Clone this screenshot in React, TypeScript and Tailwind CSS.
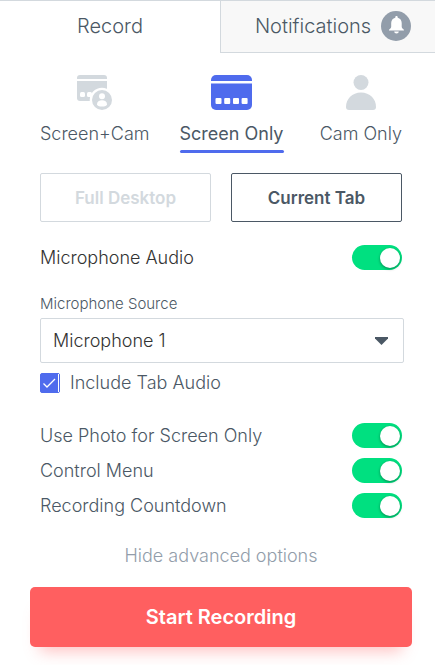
import { useState } from "react";
import type { ReactNode } from "react";

function ScreenCamIcon() {
  return (
    <svg width="35" height="35" viewBox="0 0 35 35" aria-hidden="true">
      <path d="M3 0h24a3 3 0 0 1 3 3v1H0V3a3 3 0 0 1 3-3Z" fill="#d3d9de" />
      <path d="M0 6h30v19a1 1 0 0 1-1 1H3a3 3 0 0 1-3-3Z" fill="#d3d9de" />
      <rect x="3" y="17" width="5" height="5" rx="1.5" fill="#fff" />
      <rect x="10" y="17" width="5" height="5" rx="1.5" fill="#fff" />
      <circle cx="25" cy="25" r="12.3" fill="#fff" />
      <circle cx="25" cy="25" r="10" fill="#d3d9de" />
      <circle cx="25" cy="21.3" r="3" fill="#fff" />
      <path d="M20 29.3c0-2.6 2.2-4 5-4s5 1.400 5 4c0 1.500-2.200 2.300-5 2.300s-5-.8-5-2.300Z" fill="#fff" />
    </svg>
  );
}

function ScreenIcon() {
  return (
    <svg width="41" height="35" viewBox="0 0 41 35" aria-hidden="true">
      <path d="M5 0h31a5 5 0 0 1 5 5v1H0V5a5 5 0 0 1 5-5Z" fill="#4f6bed" />
      <path d="M0 8.500h41V30a5 5 0 0 1-5 5H5a5 5 0 0 1-5-5Z" fill="#4f6bed" />
      <rect x="4.500" y="23" width="6" height="6" rx="1" fill="#fff" />
      <rect x="13.200" y="23" width="6" height="6" rx="1" fill="#fff" />
      <rect x="22" y="23" width="6" height="6" rx="1" fill="#fff" />
      <rect x="30.600" y="23" width="6" height="6" rx="1" fill="#fff" />
    </svg>
  );
}

function PersonIcon() {
  return (
    <svg width="30" height="35" viewBox="0 0 30 35" aria-hidden="true">
      <circle cx="15" cy="7.500" r="7.500" fill="#d3d9de" />
      <path d="M0 32c0-8 6-14.500 15-14.500S30 24 30 32c0 2-1 3-3 3H3c-2 0-3-1-3-3Z" fill="#d3d9de" />
    </svg>
  );
}

function BellIcon() {
  return (
    <svg width="30" height="30" viewBox="0 0 30 30" aria-hidden="true">
      <circle cx="15" cy="15" r="15" fill="#929daa" />
      <path
        d="M15.500 5c.7 0 1.200.5 1.200 1.200v.5c2.500.6 4 2.600 4 5.300v3.500c0 1.200.6 1.900 1.400 2.500.5.400.8.700.8 1.100v.4H8v-.4c0-.4.3-.7.8-1.100.8-.6 1.400-1.300 1.400-2.500V12c0-2.700 1.600-4.700 4.100-5.300v-.5c0-.7.5-1.200 1.200-1.200Z"
        fill="#fff"
      />
      <path d="M13.200 20.500h4.600a2.300 2 0 0 1-4.600 0Z" fill="#fff" />
    </svg>
  );
}

function Mode({ icon, label, active = false, className = "" }: { icon: ReactNode; label: string; active?: boolean; className?: string }) {
  return (
    <button
      type="button"
      aria-pressed={active}
      className={`flex flex-col items-center ${active ? "font-normal" : "font-light"} ${className}`}
    >
      {icon}
      <span className="mt-2 h-8 leading-8 whitespace-nowrap">{label}</span>
      <span className={`h-[3px] w-full rounded-full ${active ? "bg-[#4f6bed]" : ""}`} />
    </button>
  );
}

function Toggle({ label, dark = false }: { label: string; dark?: boolean }) {
  const [on, setOn] = useState(true);
  return (
    <label className={`flex h-[25px] items-center justify-between ${dark ? "text-[#333333]" : ""}`}>
      {label}
      <input
        type="checkbox"
        role="switch"
        checked={on}
        onChange={() => setOn(!on)}
        className="flex h-[25px] w-[50px] appearance-none items-center rounded-full bg-gray-300 px-[2px] before:size-5 before:rounded-full before:bg-white before:shadow-[0_1px_3px_rgba(0,0,0,0.4)] checked:justify-end checked:bg-[#00e080]"
      />
    </label>
  );
}

export default function App() {
  const [tabAudio, setTabAudio] = useState(true);
  return (
    <div className="border-t border-[#d3d9de] bg-white font-['Inter',sans-serif] text-lg leading-6 font-light text-[#4b5865]">
      <nav className="flex h-[52px] text-xl">
        <button type="button" className="w-[220px] shrink-0 pb-0.5">
          Record
        </button>
        <button
          type="button"
          className="flex grow items-center justify-center gap-[10px] border-b border-l border-[#d3d9de] bg-[#f8f8f8] pb-0.5 pl-[10px]"
        >
          Notifications
          <BellIcon />
        </button>
      </nav>

      <main className="pt-[22px] pr-[33px] pb-[18px] pl-10">
        <div className="flex">
          <Mode icon={<ScreenCamIcon />} label="Screen+Cam" />
          <Mode icon={<ScreenIcon />} label="Screen Only" active className="ml-[30px]" />
          <Mode icon={<PersonIcon />} label="Cam Only" className="ml-auto" />
        </div>

        <div className="mt-5 flex gap-5 text-[17px] font-semibold">
          <button type="button" className="h-[49px] flex-1 rounded-xs border border-[#d3d9de] text-[#d3d9de]">
            Full Desktop
          </button>
          <button type="button" className="h-[49px] flex-1 rounded-xs border border-[#4b5865]">
            Current Tab
          </button>
        </div>

        <div className="mt-[23px]">
          <Toggle label="Microphone Audio" dark />
        </div>

        <label htmlFor="source" className="mt-[22px] block text-[15px]">
          Microphone Source
        </label>
        <div className="mt-[2px] -mr-[2px] grid items-center">
          <select
            id="source"
            className="col-start-1 row-start-1 h-[45px] appearance-none rounded-xs border border-[#d3d9de] bg-white px-3 text-[#333333]"
          >
            <option>Microphone 1</option>
          </select>
          <svg
            className="pointer-events-none col-start-1 row-start-1 mr-4 justify-self-end"
            width="13"
            height="8"
            viewBox="0 0 13 8"
            aria-hidden="true"
          >
            <path d="M0 0h13v1.500L6.500 8 0 1.500Z" fill="#4b5865" />
          </svg>
        </div>

        <label className="mt-2 flex items-center gap-[10px]">
          <span className="grid size-5">
            <input
              type="checkbox"
              checked={tabAudio}
              onChange={() => setTabAudio(!tabAudio)}
              className="col-start-1 row-start-1 size-5 appearance-none rounded-xs border border-[#4f6bed] checked:bg-[#4f6bed]"
            />
            <svg
              className="pointer-events-none col-start-1 row-start-1"
              width="20"
              height="20"
              viewBox="0 0 20 20"
              fill="none"
              aria-hidden="true"
            >
              <path d="M18.500 1v18" stroke="#fff" />
              {tabAudio && <path d="m3.500 10.500 3.500 3.500 8-8" stroke="#fff" strokeWidth="1.300" />}
            </svg>
          </span>
          Include Tab Audio
        </label>

        <div className="mt-7 flex flex-col gap-[10px]">
          <Toggle label="Use Photo for Screen Only" />
          <Toggle label="Control Menu" />
          <Toggle label="Recording Countdown" />
        </div>

        <button type="button" className="mt-[26px] block w-full text-[#929daa]">
          Hide advanced options
        </button>

        <div className="-mx-[10px] mt-[19px]">
          <button
            type="button"
            className="h-[60px] w-full rounded-[5px] bg-[#ff5f60] text-xl font-semibold text-white shadow-[0_14px_16px_-10px_rgba(255,95,96,0.4)]"
          >
            Start Recording
          </button>
        </div>
      </main>
    </div>
  );
}
